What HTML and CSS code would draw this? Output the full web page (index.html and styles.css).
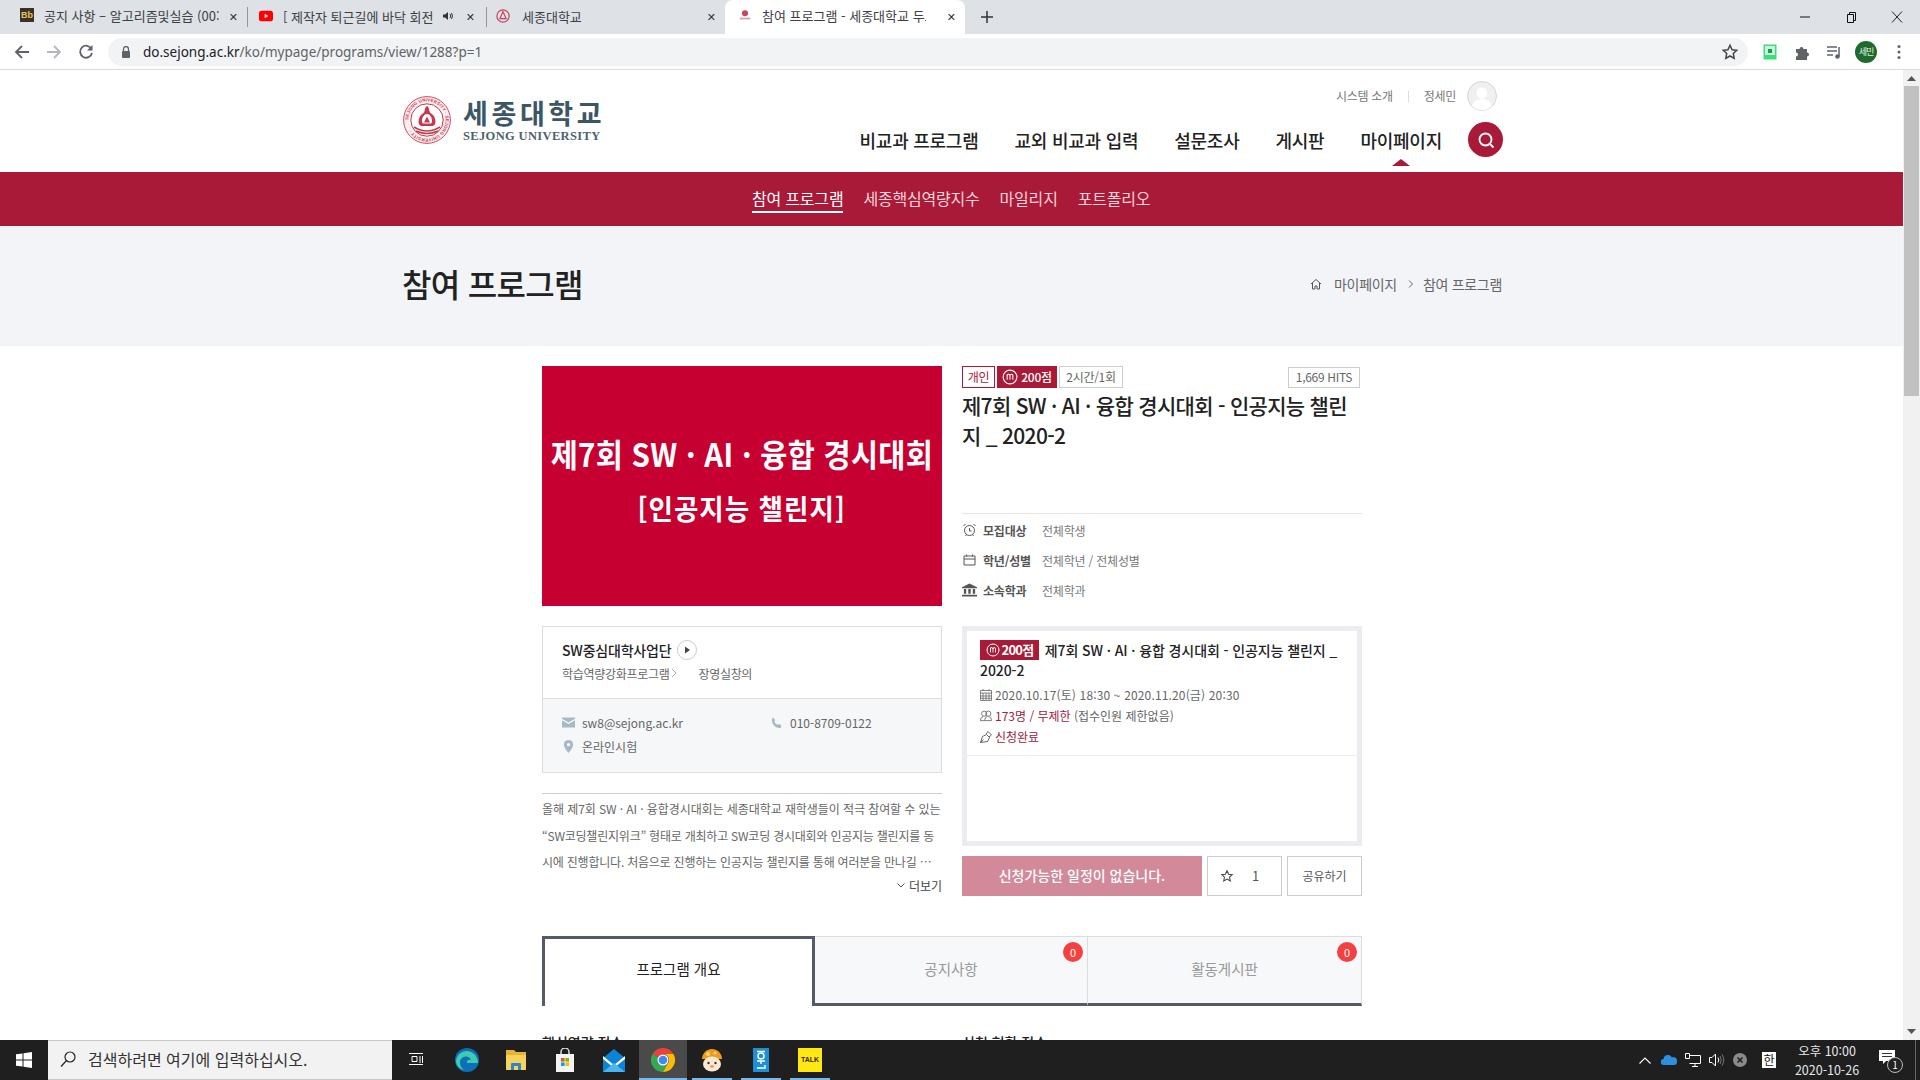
FILE: index.html
```html
<!DOCTYPE html>
<html lang="ko">

<head>
  <meta charset="UTF-8">
  <title>참여 프로그램 - 세종대학교 두드림</title>
  <link rel="stylesheet" href="styles.css">
</head>

<body>

  <!-- browser chrome -->
  <div class="tabstrip">
    <div class="tab tab-first">
      <span class="fav fav-bb">Bb</span>
      <span class="tab-title">공지 사항 – 알고리즘및실습 (00:</span>
      <span class="tab-x">✕</span>
    </div>
    <div class="tab tab-second">
      <svg class="fav" viewBox="0 0 16 16"><rect x="0" y="2" width="16" height="12" rx="3" fill="#f00"/><path d="M6.500 5.500v5l4-2.500z" fill="#fff"/></svg>
      <span class="tab-title">[ 제작자 퇴근길에 바닥 회전</span>
      <svg class="tab-sound" viewBox="0 0 12 12"><path d="M1 4.500h2l3-2.500v8l-3-2.500h-2z" fill="#333"/><path d="M8 4q1.500 2 0 4M9.500 3q2 3 0 6" fill="none" stroke="#333"/></svg>
      <span class="tab-x">✕</span>
    </div>
    <div class="tab tab-third">
      <svg class="fav" viewBox="0 0 16 16"><circle cx="8" cy="8" r="7" fill="none" stroke="#c8465c" stroke-width="1.400"/><path d="M8 3l3.500 8h-7z" fill="none" stroke="#c8465c" stroke-width="1.400"/></svg>
      <span class="tab-title">세종대학교</span>
      <span class="tab-x">✕</span>
    </div>
    <div class="tab tab-active">
      <svg class="fav" viewBox="0 0 16 16"><circle cx="8" cy="6" r="3.500" fill="#c8465c"/><rect x="2" y="11" width="12" height="2" fill="#c9a4ac"/></svg>
      <span class="tab-title">참여 프로그램 - 세종대학교 두드림</span>
      <span class="tab-x">✕</span>
    </div>
    <svg class="new-tab" viewBox="0 0 12 12"><path d="M6 0v12M0 6h12" stroke="#333" stroke-width="1.500"/></svg>
    <div class="win-btns">
      <svg viewBox="0 0 12 12"><path d="M1 6h10" stroke="#111"/></svg>
      <svg viewBox="0 0 12 12"><path d="M2.500 3.500h6v8h-6zM4.500 3.500v-2h6v8h-2" fill="none" stroke="#111"/></svg>
      <svg viewBox="0 0 12 12"><path d="M1 0.500l10 11M11 0.500l-10 11" stroke="#111" stroke-width="0.900"/></svg>
    </div>
  </div>

  <div class="toolbar">
    <svg class="tb-icon tb-back" viewBox="0 0 16 16"><path d="M15 8h-13M8 2l-6 6 6 6" fill="none" stroke="#5f6368" stroke-width="1.800"/></svg>
    <svg class="tb-icon tb-forward" viewBox="0 0 16 16"><path d="M1 8h13M8 2l6 6-6 6" fill="none" stroke="#b4b7bb" stroke-width="1.800"/></svg>
    <svg class="tb-icon tb-reload" viewBox="0 0 16 16"><path d="M13.500 5a6 6 0 1 0 .5 4" fill="none" stroke="#5f6368" stroke-width="1.800"/><path d="M14.500 1v5.500h-5.500z" fill="#5f6368"/></svg>
    <div class="omnibox">
      <svg class="lock" viewBox="0 0 10 12"><path d="M2.500 5v-2a2.500 2.500 0 0 1 5 0v2" fill="none" stroke="#5f6368" stroke-width="1.300"/><rect x="1" y="5" width="8" height="7" rx="1" fill="#5f6368"/></svg>
      <span class="url">do.sejong.ac.kr<span class="url-path">/ko/mypage/programs/view/1288?p=1</span></span>
      <svg class="omni-star" viewBox="0 0 24 24"><path d="M12 3l2.800 6 6.200.8-4.600 4.300 1.200 6.400-5.600-3.200-5.600 3.200 1.200-6.400-4.600-4.300 6.200-.8z" fill="none" stroke="#444" stroke-width="2"/></svg>
    </div>
    <div class="tb-right">
      <svg viewBox="0 0 14 16"><rect x="0.500" y="0.500" width="13" height="15" fill="#3ddc7e"/><rect x="2" y="2" width="10" height="9" fill="#c8f5da"/><rect x="5" y="5" width="4" height="4" fill="#1a9c50"/></svg>
      <svg viewBox="0 0 16 16"><path d="M2 5h3.500a2 2 0 1 1 4 0h3.500v3.500a2 2 0 1 1 0 4v3.500h-11v-3.500a2 2 0 1 0 0-4z" fill="#5f6368"/></svg>
      <svg viewBox="0 0 16 16"><path d="M1 3h10M1 7h10M1 11h6" stroke="#5f6368" stroke-width="1.500"/><path d="M13 3v9" stroke="#5f6368" stroke-width="1.500"/><circle cx="11.500" cy="12.500" r="2.300" fill="#5f6368"/></svg>
      <span class="profile">세민</span>
      <svg class="tb-dots" viewBox="0 0 4 16"><circle cx="2" cy="2.500" r="1.500" fill="#5f6368"/><circle cx="2" cy="8" r="1.500" fill="#5f6368"/><circle cx="2" cy="13.500" r="1.500" fill="#5f6368"/></svg>
    </div>
  </div>

  <div class="viewport">
    <div class="page">

      <header class="site-head">
        <div class="wrap head-inner">
          <a class="logo">
            <svg class="seal" viewBox="0 0 48 48">
              <defs><path id="sealRing" d="M24 24m-18.600 0a18.600 18.600 0 1 1 37.200 0a18.600 18.600 0 1 1-37.200 0"/></defs>
              <circle cx="24" cy="24" r="23.400" fill="#fbeff0" stroke="#cf4a60" stroke-width="1"/>
              <circle cx="24" cy="24" r="16.200" fill="#fff" stroke="#c5384f" stroke-width="1"/>
              <text class="seal-text"><textPath href="#sealRing">SEJONG UNIVERSITY · SEJONG UNIVERSITY ·</textPath></text>
              <path d="M24 10c3 2 1.500 5 3.500 7 3 1.500 5 5 5 9 0 2-1 3-2.500 4h-12c-1.500-1-2.500-2-2.500-4 0-4 2-7.500 5-9 2-2 .5-5 3.500-7z" fill="#c5384f"/>
              <path d="M24 18c3 0 5 3.500 5 7 0 1-.5 2-1 2.500h-8c-.5-.5-1-1.500-1-2.500 0-3.500 2-7 5-7z" fill="#fff"/>
              <path d="M24 20.500l3 6h-6z" fill="#c5384f"/>
              <path d="M11 31q13 8 26 0M13 35q11 5 22 0" fill="none" stroke="#c5384f" stroke-width="1.500"/>
            </svg>
            <div class="logo-text">
              <div class="logo-ko">세종대학교</div>
              <div class="logo-en">SEJONG UNIVERSITY</div>
            </div>
          </a>
          <div class="head-right">
            <div class="util">
              <span>시스템 소개</span>
              <i class="util-sep"></i>
              <span>정세민</span>
              <svg class="avatar" viewBox="0 0 30 30">
                <circle cx="15" cy="15" r="14.500" fill="#f0f0f0" stroke="#d4d4d4"/>
                <circle cx="15" cy="12" r="5.500" fill="#fff"/>
                <path d="M5 25c2-6 6-7 10-7s8 1 10 7a14 14 0 0 1-20 0z" fill="#fff"/>
              </svg>
            </div>
            <nav class="gnb">
              <a>비교과 프로그램</a>
              <a>교외 비교과 입력</a>
              <a>설문조사</a>
              <a>게시판</a>
              <a class="on">마이페이지</a>
              <span class="search-btn">
                <svg viewBox="0 0 18 18"><circle cx="8.500" cy="8.500" r="6" fill="none" stroke="#fff" stroke-width="1.800"/><path d="M13 13l3.500 3.500" stroke="#fff" stroke-width="1.800"/></svg>
              </span>
            </nav>
          </div>
        </div>
      </header>

      <div class="sub-nav">
        <a class="on">참여 프로그램</a>
        <a>세종핵심역량지수</a>
        <a>마일리지</a>
        <a>포트폴리오</a>
      </div>

      <div class="page-title-bar">
        <div class="wrap title-inner">
          <h1>참여 프로그램</h1>
          <div class="crumbs">
            <svg viewBox="0 0 12 12"><path d="M1 6l5-4.500 5 4.500M2.500 5v6h2.500v-3h2v3h2.500v-6" fill="none" stroke="#555" stroke-width="1"/></svg>
            <span>마이페이지</span>
            <svg class="crumb-arrow" viewBox="0 0 6 8"><path d="M1 .5l3.500 3.500-3.500 3.500" fill="none" stroke="#666"/></svg>
            <span>참여 프로그램</span>
          </div>
        </div>
      </div>

      <main class="content">
        <div class="top-grid">
          <div class="banner">
            <div class="banner-1">제7회 SW · AI · 융합 경시대회</div>
            <div class="banner-2">[인공지능 챌린지]</div>
          </div>

          <div class="summary">
            <div class="badges">
              <span class="bdg bdg-line">개인</span>
              <span class="bdg bdg-fill">
                <svg viewBox="0 0 14 14"><circle cx="7" cy="7" r="6" fill="none" stroke="#fff"/><path d="M4.500 9.500v-5M4.500 6q0-1.500 1.200-1.500t1.300 1.500v3.500M7 6q0-1.500 1.300-1.500t1.200 1.500v3.500" fill="none" stroke="#fff" stroke-width=".9"/></svg>
                200점
              </span>
              <span class="bdg bdg-gray">2시간/1회</span>
              <span class="bdg bdg-gray bdg-hits">1,669 HITS</span>
            </div>
            <h2 class="prog-title">제7회 SW · AI · 융합 경시대회 - 인공지능 챌린지 _ 2020-2</h2>
            <ul class="meta">
              <li>
                <svg viewBox="0 0 14 14"><circle cx="7" cy="7.500" r="5" fill="none" stroke="#555"/><path d="M7 5v3h2M1 3l2-2M13 3l-2-2M3 13l1-1.500M11 13l-1-1.500" fill="none" stroke="#555"/></svg>
                <b>모집대상</b><span>전체학생</span>
              </li>
              <li>
                <svg viewBox="0 0 14 14"><path d="M1.500 3h11v9h-11zM1.500 6h11M4 1.500v2M10 1.500v2" fill="none" stroke="#555"/></svg>
                <b>학년/성별</b><span>전체학년 / 전체성별</span>
              </li>
              <li>
                <svg viewBox="0 0 16 14"><path d="M8 0l8 4v1h-16v-1zM2 6h2.500v5h-2.500zM6.700 6h2.600v5h-2.600zM11.500 6h2.500v5h-2.500zM0 12h16v2h-16z" fill="#555"/></svg>
                <b>소속학과</b><span>전체학과</span>
              </li>
            </ul>
          </div>

          <div class="left-col">
            <div class="org-card">
              <div class="org-top">
                <div class="org-name">SW중심대학사업단
                  <svg class="org-play" viewBox="0 0 20 20"><circle cx="10" cy="10" r="9.500" fill="#fff" stroke="#ccc"/><path d="M8 6.500v7l5-3.500z" fill="#444"/></svg>
                </div>
                <div class="org-path"><span>학습역량강화프로그램</span><svg viewBox="0 0 6 10"><path d="M1 1l4 4-4 4" fill="none" stroke="#aaa"/></svg><span class="org-path-2">장영실창의</span></div>
              </div>
              <div class="org-bottom">
                <div class="org-item org-mail">
                  <svg viewBox="0 0 14 11"><path d="M0 0h14v1.500l-7 4-7-4zM0 3l7 4 7-4v8h-14z" fill="#a9b8c6"/></svg>
                  <span>sw8@sejong.ac.kr</span>
                </div>
                <div class="org-item org-tel">
                  <svg viewBox="0 0 12 12"><path d="M2.500 0.500l2 3-1 1.500q1 2.500 3.500 3.500l1.500-1 3 2-1 2.500q-4 .5-7-2.500t-2.500-7z" fill="#a9b8c6"/></svg>
                  <span>010-8709-0122</span>
                </div>
                <div class="org-item org-place">
                  <svg viewBox="0 0 10 14"><path d="M5 0a5 5 0 0 1 5 5q0 3-5 9-5-6-5-9a5 5 0 0 1 5-5z" fill="#a9b8c6"/><circle cx="5" cy="5" r="1.800" fill="#f5f7f9"/></svg>
                  <span>온라인시험</span>
                </div>
              </div>
            </div>
            <div class="intro">
              <span>올해 제7회 SW · AI · 융합경시대회는 세종대학교 재학생들이 적극 참여할 수 있는</span>
              <span>“SW코딩챌린지위크” 형태로 개최하고 SW코딩 경시대회와 인공지능 챌린지를 동</span>
              <span>시에 진행합니다. 처음으로 진행하는 인공지능 챌린지를 통해 여러분을 만나길 …</span>
            </div>
            <div class="more">
              <svg viewBox="0 0 8 5"><path d="M.5 .5l3.500 3.500 3.500-3.500" fill="none" stroke="#555"/></svg>
              <span>더보기</span>
            </div>
          </div>

          <div class="right-col">
            <div class="sched-box">
              <div class="sched-main">
                <div class="sched-title">
                  <span class="sched-pt">
                    <svg viewBox="0 0 14 14"><circle cx="7" cy="7" r="6" fill="none" stroke="#fff"/><path d="M4.500 9.500v-5M4.500 6q0-1.500 1.200-1.500t1.300 1.500v3.500M7 6q0-1.500 1.300-1.500t1.200 1.500v3.500" fill="none" stroke="#fff" stroke-width=".9"/></svg>
                    200점
                  </span>
                  제7회 SW · AI · 융합 경시대회 - 인공지능 챌린지 _ 2020-2
                </div>
                <div class="sched-line">
                  <svg viewBox="0 0 12 12"><path d="M.5 1.500h11v10h-11zM.5 4h11M3 4v7.500M6 4v7.500M9 4v7.500M.5 7h11M.5 9.300h11M3 0v2M9 0v2" fill="none" stroke="#666" stroke-width=".8"/></svg>
                  <span class="sched-date">2020.10.17(토) 18:30 ~ 2020.11.20(금) 20:30</span>
                </div>
                <div class="sched-line">
                  <svg viewBox="0 0 13 12"><circle cx="4.500" cy="3.500" r="2.800" fill="none" stroke="#666" stroke-width=".9"/><circle cx="9" cy="3.500" r="2.800" fill="none" stroke="#666" stroke-width=".9"/><path d="M.5 11q0-4 3-4.500M5 11q0-4 3-4.500M12.500 11q0-4-3-4.500M.5 11h12" fill="none" stroke="#666" stroke-width=".9"/></svg>
                  <span><em>173명 / 무제한</em> (접수인원 제한없음)</span>
                </div>
                <div class="sched-line">
                  <svg viewBox="0 0 12 12"><path d="M.5 11.500l2-6 4-2 3 3-2 4zM.5 11.500l3-3M6 3l2-2.500 3.500 3.500-2.500 2" fill="none" stroke="#555" stroke-width=".9"/></svg>
                  <span><em>신청완료</em></span>
                </div>
              </div>
            </div>
            <div class="actions">
              <div class="apply-btn">신청가능한 일정이 없습니다.</div>
              <div class="like-btn">
                <svg viewBox="0 0 24 24"><path d="M12 3l2.800 6 6.200.8-4.600 4.300 1.200 6.400-5.600-3.200-5.600 3.200 1.200-6.400-4.600-4.300 6.200-.8z" fill="none" stroke="#444" stroke-width="1.800"/></svg>
                <span>1</span>
              </div>
              <div class="share-btn">공유하기</div>
            </div>
          </div>
        </div>

        <div class="tabs">
          <div class="tab-item on">프로그램 개요</div>
          <div class="tab-item">공지사항<span class="count">0</span></div>
          <div class="tab-item">활동게시판<span class="count">0</span></div>
        </div>

        <div class="scores">
          <div>핵심역량 점수</div>
          <div>신청 현황 점수</div>
        </div>
      </main>
    </div>

    <div class="scrollbar">
      <svg viewBox="0 0 9 5"><path d="M4.500 0l4.500 5h-9z" fill="#555"/></svg>
      <div class="thumb"></div>
      <svg viewBox="0 0 9 5"><path d="M4.500 5l4.500-5h-9z" fill="#555"/></svg>
    </div>
  </div>

  <!-- windows taskbar -->
  <footer class="taskbar">
    <div class="start">
      <svg viewBox="0 0 16 16"><path d="M0 2.300l6.500-.9v6.200h-6.500zM7.500 1.300l8.500-1.300v7.600h-8.500zM0 8.500h6.500v6.100l-6.500-.9zM7.500 8.500h8.500v7.500l-8.500-1.200z" fill="#fff"/></svg>
    </div>
    <div class="tb-search">
      <svg viewBox="0 0 16 16"><circle cx="10" cy="6" r="5" fill="none" stroke="#222" stroke-width="1.200"/><path d="M6.500 9.500l-5.500 6" stroke="#222" stroke-width="1.200"/></svg>
      <span>검색하려면 여기에 입력하십시오.</span>
    </div>
    <div class="tb-apps">
      <div class="app app-view">
        <svg viewBox="0 0 16 16"><path d="M1 1.500h14M1 12.500h14M4 4.500h5v5h-5zM12 4v7M14.500 4v7" fill="none" stroke="#fff"/></svg>
      </div>
      <div class="app">
        <svg class="big" viewBox="0 0 24 24"><circle cx="12" cy="12" r="12" fill="#0c6fb8"/><path d="M1 13c1-8 9-12 15-9 5 2 7 7 7 11h-11c-1-3 3-4 4-3-1-4-7-5-10-1-2 3-1 8 3 11-4-1-8-4-8-9z" fill="#3ecbb0"/></svg>
      </div>
      <div class="app">
        <svg class="big" viewBox="0 0 24 24"><path d="M2 2h8l2 2h10v4h-20z" fill="#e8b532"/><path d="M2 7h20v15h-20z" fill="#f7d35e"/><path d="M7 22v-6a1 1 0 0 1 1-1h8a1 1 0 0 1 1 1v6h-3v-4h-4v4z" fill="#2b87c9"/></svg>
      </div>
      <div class="app">
        <svg class="big" viewBox="0 0 24 24"><path d="M8 6v-2a4 4 0 0 1 8 0v2" fill="none" stroke="#ddd" stroke-width="1.500"/><path d="M3 6h18v18h-18z" fill="#f3f3f3"/><rect x="8" y="10" width="3.600" height="3.600" fill="#f25022"/><rect x="12.400" y="10" width="3.600" height="3.600" fill="#7fba00"/><rect x="8" y="14.400" width="3.600" height="3.600" fill="#00a4ef"/><rect x="12.400" y="14.400" width="3.600" height="3.600" fill="#ffb900"/></svg>
      </div>
      <div class="app">
        <svg class="big" viewBox="0 0 24 24"><path d="M1 10l11-9 11 9v14h-22z" fill="#0a84d6"/><path d="M1 8l11 9 11-9v3l-11 9-11-9z" fill="#fff"/><path d="M1 24l11-9 11 9z" fill="#4db5ee"/></svg>
      </div>
      <div class="app app-on">
        <svg class="big" viewBox="0 0 24 24"><path d="M12 12l-10.400-6a12 12 0 0 1 20.800 0h-10.400z" fill="#ea4335"/><path d="M12 12l-10.400-6a12 12 0 0 0 10.400 18l5.200-9z" fill="#34a853"/><path d="M12 6h10.400a12 12 0 0 1-10.400 18l5.200-9a6 6 0 0 0-5.200-9z" fill="#fbbc05"/><circle cx="12" cy="12" r="5.500" fill="#fff"/><circle cx="12" cy="12" r="4.300" fill="#4285f4"/></svg>
      </div>
      <div class="app app-run">
        <svg class="big" viewBox="0 0 24 24"><path d="M2 11c0-6 5-10 10-10s10 4 10 10z" fill="#ee9a1c"/><circle cx="8" cy="6" r="2" fill="#fbd96b"/><circle cx="15" cy="5" r="1.600" fill="#fbd96b"/><ellipse cx="12" cy="16" rx="9" ry="7.500" fill="#fde9cf"/><circle cx="8.500" cy="15" r="1.200" fill="#333"/><circle cx="15.500" cy="15" r="1.200" fill="#333"/><ellipse cx="12" cy="18.500" rx="2" ry="1.300" fill="#e88"/></svg>
      </div>
      <div class="app app-run">
        <svg class="big" viewBox="0 0 24 24"><path d="M4 0h16v24h-16z" fill="#1b8fd8"/><circle cx="12" cy="8" r="3" fill="none" stroke="#fff" stroke-width="1.500"/><path d="M8 3.500h8M8 13h8M12 13v3M8 20h8v-3" fill="none" stroke="#fff" stroke-width="1.500"/></svg>
      </div>
      <div class="app app-run">
        <div class="kakao">TALK</div>
      </div>
    </div>
    <div class="tray">
      <svg class="tr-chev" viewBox="0 0 12 7"><path d="M.5 6.500l5.500-5.500 5.500 5.500" fill="none" stroke="#fff" stroke-width="1.100"/></svg>
      <svg class="tr-cloud" viewBox="0 0 16 10"><path d="M3 10a3 3 0 0 1-.5-6 4.500 4.500 0 0 1 8.500-1.500 3.500 3.500 0 0 1 5 3.500v1a3 3 0 0 1-3 3z" fill="#2d8fe0"/></svg>
      <svg class="tr-net" viewBox="0 0 16 14"><path d="M.5 .5h4v5h-4zM5 2.500h10.500v8h-11M7 13.500h6M10 10.500v3" fill="none" stroke="#fff"/></svg>
      <svg class="tr-vol" viewBox="0 0 16 14"><path d="M.5 4.500h2.500l3.500-3.500v12l-3.500-3.500h-2.500z" fill="none" stroke="#fff"/><path d="M9 4.500q1.500 2.500 0 5" fill="none" stroke="#fff"/><path d="M11 3q2.500 4 0 8M13 1.500q3.500 5.500 0 11" fill="none" stroke="#777"/></svg>
      <svg class="tr-err" viewBox="0 0 14 14"><circle cx="7" cy="7" r="7" fill="#8b8b8b"/><path d="M4.500 4.500l5 5M9.500 4.500l-5 5" stroke="#222" stroke-width="1.600"/></svg>
      <span class="tr-ime">한</span>
      <div class="clock">
        <span>오후 10:00</span>
        <span>2020-10-26</span>
      </div>
      <div class="notif">
        <svg viewBox="0 0 16 14"><path d="M0 0h16v11h-9l-3 3v-3h-4z" fill="#fff"/><path d="M3 3.500h10M3 6.500h10" stroke="#333"/></svg>
        <span class="notif-n">1</span>
      </div>
      <i class="desk-peek"></i>
    </div>
  </footer>

</body>

</html>
```

FILE: styles.css
```css
* {
  box-sizing: border-box;
}

html,
body {
  margin: 0;
  height: 100%;
  overflow: hidden;
}

body {
  width: 1920px;
  height: 1080px;
  display: flex;
  flex-direction: column;
  font-family: "Noto Sans CJK KR", "Noto Sans", sans-serif;
  font-size: 12px;
  color: #333;
  background-color: #fff;
}

svg {
  display: block;
  flex: none;
}

/* browser chrome */
.tabstrip {
  height: 34px;
  flex: none;
  display: flex;
  align-items: center;
  background-color: #dee1e6;
}

.tab {
  position: relative;
  display: flex;
  align-items: center;
  width: 240px;
  height: 34px;
  padding-bottom: 4px;
  font-size: 13px;
  color: #3c4043;
}

.tab-first {
  width: 247px;
  padding-left: 20px;
}

.tab-second,
.tab-third {
  width: 239px;
  height: 20px;
  padding-bottom: 2px;
  border-left: 1px solid #93969b;
}

.tab-second {
  padding-left: 11px;
}

.tab-third {
  padding-left: 9px;
}

.tab-active {
  padding-left: 13px;
  background-color: #fff;
  border-radius: 8px 8px 0 0;
}

.fav {
  width: 14px;
  height: 14px;
  margin-right: 10px;
  flex: none;
}

.tab-third .fav {
  margin-right: 12px;
}

.fav-bb {
  background-color: #3a3226;
  color: #e7c65a;
  font: bold 9px/14px "Liberation Sans", sans-serif;
  text-align: center;
}

.tab-title {
  width: 150px;
  overflow: hidden;
  white-space: nowrap;
}

.tab-first .tab-title {
  width: 175px;
}

.tab-third .tab-title {
  width: 172px;
}

.tab-active .tab-title {
  width: 164px;
}

.tab-x {
  position: absolute;
  right: 9px;
  top: 50%;
  transform: translateY(-50%);
  font: 11px "DejaVu Sans", sans-serif;
  color: #333;
}

.tab-second .tab-x {
  right: 11px;
}

.tab-sound {
  width: 12px;
  height: 12px;
  margin-left: 9px;
}

.new-tab {
  width: 12px;
  height: 12px;
  margin-left: 16px;
}

.win-btns {
  margin-left: auto;
  display: flex;
  align-items: center;
  gap: 34px;
  padding-right: 17px;
}

.win-btns svg {
  width: 12px;
  height: 12px;
}

.toolbar {
  position: relative;
  height: 36px;
  flex: none;
  display: flex;
  align-items: center;
  padding-left: 14px;
  background-color: #fff;
  border-bottom: 1px solid #dadce0;
}

.tb-icon {
  width: 16px;
  height: 16px;
  margin-right: 16px;
}

.omnibox {
  width: 1640px;
  height: 28px;
  margin-left: -2px;
  display: flex;
  align-items: center;
  padding-left: 13px;
  padding-right: 9px;
  background-color: #f1f3f4;
  border-radius: 14px;
}

.lock {
  width: 10px;
  height: 12px;
  margin-right: 12px;
}

.url {
  font: 13.500px "Noto Sans", sans-serif;
  color: #202124;
}

.url-path {
  color: #5f6368;
}

.omni-star {
  margin-left: auto;
  width: 18px;
  height: 18px;
}

.tb-right {
  display: flex;
  align-items: center;
  gap: 16px;
  margin-left: 14px;
}

.tb-right svg {
  width: 16px;
  height: 16px;
}

.tb-right svg.tb-dots {
  width: 4px;
  margin-left: 4px;
}

.profile {
  width: 22px;
  height: 22px;
  margin-left: -3px;
  border-radius: 50%;
  background-color: #1e6b2e;
  color: #e6f2e6;
  font-size: 9px;
  line-height: 22px;
  text-align: center;
  letter-spacing: -1px;
}

/* page */
.viewport {
  flex: 1;
  min-height: 0;
  display: flex;
}

.page {
  flex: 1;
  min-width: 0;
  overflow: hidden;
}

.scrollbar {
  width: 17px;
  flex: none;
  display: flex;
  flex-direction: column;
  align-items: center;
  padding-top: 6px;
  padding-bottom: 6px;
  background-color: #f1f1f1;
}

.scrollbar svg {
  width: 9px;
  height: 5px;
}

.thumb {
  width: 15px;
  height: 310px;
  margin-top: 5px;
  margin-bottom: auto;
  background-color: #c1c1c1;
}

.wrap {
  width: 1100px;
  margin-left: 402px;
}

.site-head {
  height: 102px;
  background-color: #fff;
}

.head-inner {
  display: flex;
  justify-content: space-between;
}

.logo {
  display: flex;
  align-items: center;
  gap: 12px;
  height: 102px;
  padding-bottom: 2px;
  padding-left: 1px;
}

.seal {
  width: 48px;
  height: 48px;
}

.seal-text {
  font: bold 4.400px "Liberation Sans", sans-serif;
  fill: #c5384f;
  letter-spacing: .2px;
}

.logo-ko {
  font-size: 27px;
  font-weight: 700;
  line-height: 30px;
  letter-spacing: 3.600px;
  color: #3d5666;
}

.logo-en {
  margin-top: 1px;
  font: bold 12.500px/14px "Liberation Serif", serif;
  color: #4d6270;
  letter-spacing: .35px;
}

.head-right {
  display: flex;
  flex-direction: column;
  align-items: flex-end;
  width: 700px;
}

.util {
  height: 30px;
  margin-top: 11px;
  margin-right: 5px;
  display: flex;
  align-items: center;
  font-size: 12px;
  letter-spacing: -.3px;
  color: #777;
}

.util span {
  padding-bottom: 2px;
}

.util-sep {
  width: 1px;
  height: 11px;
  margin: 0 15px;
  background-color: #ddd;
}

.avatar {
  width: 30px;
  height: 30px;
  margin-left: 11px;
}

.gnb {
  margin-top: 11px;
  margin-right: -1px;
  display: flex;
  align-items: center;
  gap: 36px;
  font-size: 18px;
  font-weight: 500;
  letter-spacing: -.25px;
  color: #222;
}

.gnb .on {
  position: relative;
}

.gnb .on::after {
  content: "";
  position: absolute;
  left: 50%;
  top: 32px;
  margin-left: -9px;
  border-left: 9px solid transparent;
  border-right: 9px solid transparent;
  border-bottom: 7px solid #a91a38;
}

.search-btn {
  width: 35px;
  height: 35px;
  margin-left: -10px;
  display: flex;
  align-items: center;
  justify-content: center;
  border-radius: 50%;
  background-color: #a91a38;
}

.search-btn svg {
  width: 18px;
  height: 18px;
}

.sub-nav {
  height: 54px;
  display: flex;
  align-items: center;
  padding-left: 752px;
  gap: 20px;
  background-color: #a91a38;
  font-size: 16px;
  letter-spacing: -.2px;
  color: #f4d3da;
}

.sub-nav a {
  line-height: 26px;
  height: 28px;
}

.sub-nav .on {
  color: #fff;
  border-bottom: 2px solid #fff;
}

.page-title-bar {
  height: 120px;
  background-color: #f2f4f8;
}

.title-inner {
  display: flex;
  align-items: center;
  justify-content: space-between;
  height: 116px;
}

h1 {
  margin: 0 0 2px;
  font-size: 32px;
  font-weight: 500;
  letter-spacing: -.7px;
  color: #222;
}

.crumbs {
  display: flex;
  align-items: center;
  font-size: 14px;
  letter-spacing: -.3px;
  color: #666;
}

.crumbs svg {
  width: 12px;
  height: 12px;
  margin-right: 12px;
}

.crumbs svg.crumb-arrow {
  width: 6px;
  height: 8px;
  margin-left: 11px;
  margin-right: 9px;
}

.content {
  width: 820px;
  margin-left: 542px;
  padding-top: 20px;
}

.top-grid {
  display: grid;
  grid-template-columns: 400px 400px;
  grid-template-rows: 240px auto;
  column-gap: 20px;
  row-gap: 20px;
}

.banner {
  height: 240px;
  display: flex;
  flex-direction: column;
  align-items: center;
  justify-content: center;
  gap: 20px;
  padding-bottom: 14px;
  background-color: #c60030;
  color: #fff;
  font-weight: 700;
}

.banner-1 {
  font-size: 32px;
  line-height: 38px;
  letter-spacing: .3px;
  transform: scaleX(.92);
  white-space: nowrap;
}

.banner-2 {
  font-size: 28px;
  line-height: 32px;
  letter-spacing: 1px;
  transform: scaleX(.95);
}

.summary {
  display: flex;
  flex-direction: column;
}

.badges {
  display: flex;
  gap: 2px;
  height: 22px;
}

.bdg {
  display: flex;
  align-items: center;
  justify-content: center;
  height: 22px;
  padding-bottom: 2px;
  font-size: 12px;
  letter-spacing: -.3px;
  border: 1px solid #ccc;
  color: #666;
}

.bdg-line {
  width: 33px;
  border-color: #a91a38;
  color: #a91a38;
}

.bdg-fill {
  width: 60px;
  gap: 3px;
  background-color: #a91a38;
  border-color: #a91a38;
  color: #fff;
  font-weight: 500;
}

.bdg-fill svg {
  width: 16px;
  height: 16px;
  margin-top: 2px;
}

.bdg-gray {
  width: 64px;
}

.bdg-hits {
  width: 72px;
  height: 21px;
  margin-top: 1px;
  margin-left: auto;
  margin-right: 2px;
}

.prog-title {
  margin: 2px 0 0;
  height: 124px;
  font-size: 21px;
  font-weight: 500;
  line-height: 30px;
  letter-spacing: -.7px;
  color: #222;
  border-bottom: 1px solid #e5e5e5;
}

.meta {
  list-style: none;
  margin: 1px 0 0;
  padding: 0;
}

.meta li {
  display: flex;
  align-items: center;
  height: 30px;
  color: #777;
  letter-spacing: -.2px;
}

.meta svg {
  width: 15px;
  height: 14px;
  margin-right: 6px;
}

.meta b {
  width: 59px;
  font-weight: 700;
  color: #555;
}

.org-card {
  height: 147px;
  border: 1px solid #ddd;
}

.org-top {
  height: 72px;
  padding: 11px 19px 0;
  border-bottom: 1px solid #ddd;
}

.org-name {
  display: flex;
  align-items: center;
  gap: 6px;
  height: 24px;
  font-size: 14px;
  font-weight: 500;
  letter-spacing: -.2px;
  color: #222;
}

.org-play {
  width: 20px;
  height: 20px;
}

.org-path {
  display: flex;
  align-items: center;
  height: 22px;
  color: #666;
  letter-spacing: -.3px;
}

.org-path svg {
  width: 6px;
  height: 10px;
  margin-left: 2px;
}

.org-path-2 {
  margin-left: 21px;
}

.org-bottom {
  display: flex;
  flex-wrap: wrap;
  align-content: flex-start;
  height: 73px;
  padding: 11px 19px 0;
  background-color: #f5f7f9;
}

.org-item {
  display: flex;
  align-items: center;
  height: 24px;
  color: #666;
  font-size: 12px;
}

.org-item svg {
  width: 13px;
  height: 11px;
  margin-right: 7px;
}

.org-mail {
  width: 208px;
}

.org-tel {
  width: 150px;
}

.org-place {
  width: 100%;
}

.org-place svg {
  height: 13px;
}

.intro {
  margin-top: 20px;
  padding-top: 2px;
  border-top: 1px solid #ccc;
  color: #666;
  letter-spacing: -.22px;
  line-height: 26.500px;
}

.intro span {
  display: block;
  white-space: nowrap;
}

.intro span:first-child {
  letter-spacing: -.08px;
}

.more {
  display: flex;
  align-items: center;
  justify-content: flex-end;
  gap: 4px;
  margin-top: 2px;
  height: 16px;
  color: #444;
}

.more svg {
  width: 8px;
  height: 5px;
}

.sched-box {
  height: 220px;
  border: 5px solid #ebecf0;
  margin-top: 0;
}

.sched-main {
  height: 125px;
  padding: 9px 13px 0;
  border-bottom: 1px solid #eee;
}

.sched-title {
  font-size: 14px;
  font-weight: 500;
  line-height: 20px;
  letter-spacing: -.1px;
  color: #222;
  margin-bottom: 4px;
}

.sched-pt {
  display: inline-flex;
  align-items: center;
  justify-content: center;
  gap: 2px;
  width: 59px;
  height: 20px;
  margin-right: 2px;
  vertical-align: top;
  background-color: #a91a38;
  color: #fff;
  font-size: 13px;
  font-weight: 700;
  letter-spacing: -.8px;
}

.sched-pt svg {
  width: 14px;
  height: 14px;
}

.sched-line {
  display: flex;
  align-items: center;
  gap: 3px;
  height: 21px;
  color: #666;
  white-space: nowrap;
}

.sched-line svg {
  width: 12px;
  height: 12px;
}

.sched-date {
  letter-spacing: .15px;
}

.sched-line em {
  font-style: normal;
  color: #9a2340;
}

.actions {
  display: flex;
  gap: 5px;
  margin-top: 10px;
  height: 40px;
}

.apply-btn {
  width: 240px;
  display: flex;
  align-items: center;
  justify-content: center;
  padding-bottom: 2px;
  background-color: #d28a9b;
  color: #fff;
  font-size: 14px;
  font-weight: 500;
}

.like-btn,
.share-btn {
  width: 75px;
  display: flex;
  align-items: center;
  border: 1px solid #ccc;
  color: #555;
}

.like-btn {
  gap: 18px;
  padding-left: 12px;
  padding-bottom: 1px;
  font-size: 13px;
}

.like-btn svg {
  width: 14px;
  height: 14px;
}

.share-btn {
  justify-content: center;
  padding-bottom: 2px;
  font-size: 12px;
}

.tabs {
  display: grid;
  grid-template-columns: 273px 273px 274px;
  height: 70px;
  margin-top: 40px;
}

.tab-item {
  position: relative;
  display: flex;
  align-items: center;
  justify-content: center;
  padding-bottom: 4px;
  font-size: 14.500px;
  color: #999;
  background-color: #f7f8fa;
  border-top: 1px solid #ddd;
  border-right: 1px solid #ddd;
  border-bottom: 3px solid #555a6a;
}

.tab-item.on {
  padding-bottom: 8px;
  background-color: #fff;
  color: #222;
  border: 3px solid #555a6a;
  border-bottom: 0;
}

.count {
  position: absolute;
  top: 5px;
  right: 4px;
  width: 20px;
  height: 20px;
  border-radius: 50%;
  background-color: #f44040;
  color: #fff;
  font-size: 11px;
  line-height: 20px;
  text-align: center;
}

.scores {
  display: grid;
  grid-template-columns: 420px 400px;
  margin-top: 26px;
  font-size: 14px;
  font-weight: 500;
  color: #222;
}

/* taskbar */
.taskbar {
  height: 40px;
  flex: none;
  display: flex;
  align-items: center;
  background-color: #1f1f1f;
  color: #fff;
}

.start {
  width: 48px;
  height: 40px;
  display: flex;
  align-items: center;
  justify-content: center;
}

.start svg {
  width: 16px;
  height: 16px;
}

.tb-search {
  width: 344px;
  height: 40px;
  display: flex;
  align-items: center;
  gap: 12px;
  padding-left: 12px;
  padding-bottom: 2px;
  background-color: #f2f2f2;
  border-top: 1px solid #c8c8c8;
  border-bottom: 1px solid #c8c8c8;
  color: #333;
  font-size: 16px;
}

.tb-search svg {
  width: 16px;
  height: 16px;
}

.tb-apps {
  display: flex;
  height: 40px;
}

.app {
  position: relative;
  width: 48px;
  height: 40px;
  margin-right: 1px;
  display: flex;
  align-items: center;
  justify-content: center;
}

.app-view {
  margin-right: 3px;
}

.app svg {
  width: 16px;
  height: 16px;
}

.app svg.big {
  width: 24px;
  height: 24px;
}

.app-on {
  background-color: #4a4a4a;
}

.app-on::after,
.app-run::after {
  content: "";
  position: absolute;
  left: 4px;
  right: 4px;
  bottom: 0;
  height: 2px;
  background-color: #76b9ed;
}

.app-on::after {
  left: 0;
  right: 0;
}

.kakao {
  width: 24px;
  height: 24px;
  background-color: #ffe812;
  color: #3a1d1d;
  font: bold 7px/24px "Liberation Sans", sans-serif;
  text-align: center;
}

.tray {
  margin-left: auto;
  display: flex;
  align-items: center;
}

.tr-chev {
  width: 12px;
  height: 7px;
  margin-right: 10px;
}

.tr-cloud {
  width: 16px;
  height: 10px;
  margin-right: 8px;
}

.tr-net {
  width: 16px;
  height: 14px;
  margin-right: 8px;
}

.tr-vol {
  width: 16px;
  height: 14px;
  margin-right: 8px;
}

.tr-err {
  width: 14px;
  height: 14px;
  margin-right: 15px;
}

.tr-ime {
  width: 14px;
  height: 16px;
  margin-right: 18px;
  background-color: #fff;
  color: #111;
  font-size: 12px;
  line-height: 15px;
  text-align: center;
}

.clock {
  display: flex;
  flex-direction: column;
  align-items: center;
  width: 66px;
  font-size: 12.500px;
  line-height: 19px;
  color: #e8e8e8;
}

.notif {
  position: relative;
  width: 17px;
  height: 14px;
  margin-left: 19px;
  margin-bottom: 6px;
}

.notif svg {
  width: 16px;
  height: 14px;
}

.notif-n {
  position: absolute;
  left: 8px;
  top: 7px;
  width: 16px;
  height: 16px;
  border-radius: 50%;
  background-color: #222;
  border: 1px solid #bbb;
  font-size: 10px;
  line-height: 14px;
  text-align: center;
}

.desk-peek {
  width: 5px;
  height: 40px;
  margin-left: 19px;
  border-left: 1px solid #666;
}
```
